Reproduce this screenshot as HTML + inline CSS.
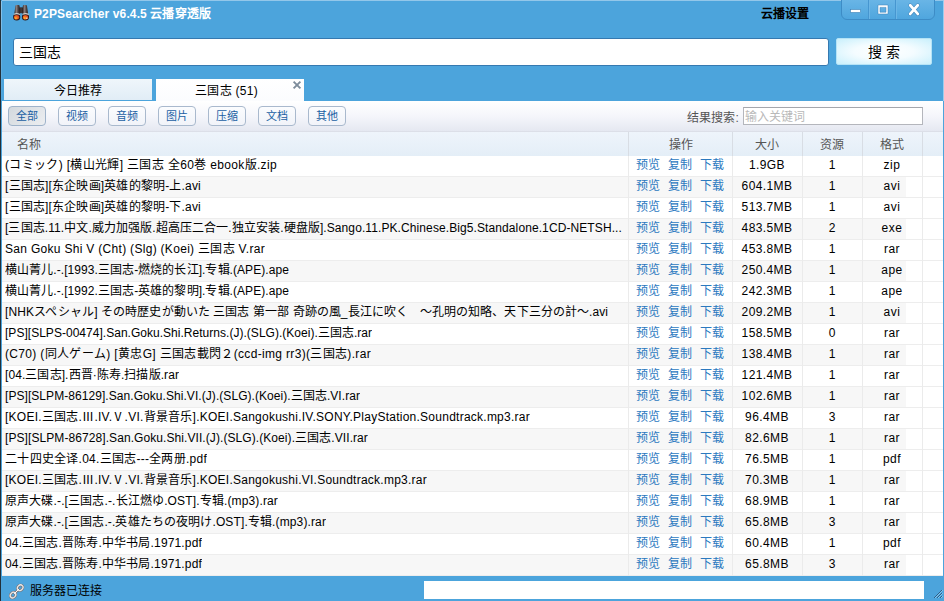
<!DOCTYPE html>
<html lang="zh-CN"><head><meta charset="utf-8"><title>P2PSearcher v6.4.5 云播穿透版</title>
<style>
*{box-sizing:border-box;margin:0;padding:0}
html,body{width:944px;height:601px;overflow:hidden}
body{position:relative;background:#4ca4dc;font-family:"Liberation Sans",sans-serif;font-size:12px;color:#000;line-height:1}
.a{position:absolute;white-space:nowrap}
.k{display:inline-block;text-align:justify;text-align-last:justify;white-space:nowrap;vertical-align:baseline}
#bl{left:0;top:0;width:1px;height:601px;background:#22303a}
#br{left:943px;top:0;width:1px;height:101px;background:#9ccdee}
#bt{left:2px;top:0;width:942px;height:1px;background:#93c7ea}
#bl2{left:1px;top:1px;width:1px;height:100px;background:linear-gradient(#8cc4ea,#4ca4dc)}
#title{left:34px;top:6px;height:16px;line-height:16px;font-weight:bold;color:#fff;font-size:12px;letter-spacing:.12px}
#yb{left:761px;top:6px;height:16px;line-height:16px;font-weight:bold;color:#000;font-size:12px}
#wc{left:841px;top:-1px;width:94px;height:21px;border:1px solid #3d8cc6;border-radius:0 0 6px 6px;background:linear-gradient(#69b5e6,#4fa6de);overflow:hidden}
#wc i{position:absolute;top:0;width:1px;height:19px;background:#4696d0;box-shadow:1px 0 0 #6cb6e6}
#si{left:13px;top:38px;width:816px;height:28px;background:#fff;border:1px solid #3579b0;border-radius:3px;font-size:14px;line-height:26px;padding-left:5px}
#sb{left:836px;top:38px;width:96px;height:27px;border-radius:2px;background:radial-gradient(ellipse at center,#ffffff 0%,#f4fcff 45%,#c9f0fc 100%);border:1px solid #b5e3f6;font-size:14px;line-height:26px;text-align:center;font-family:"Liberation Sans",serif}
#t1{left:4px;top:79px;width:148px;height:21px;background:linear-gradient(#eff6fb,#e1edf6);text-align:center;line-height:24px;overflow:hidden}
#t2{left:156px;top:79px;width:148px;height:22px;background:linear-gradient(#ffffff,#fbfcfe);line-height:24px;overflow:hidden;letter-spacing:.3px}
#fb{left:2px;top:101px;width:941px;height:31px;background:linear-gradient(#ffffff 0%,#f5f6fb 50%,#e5e8f1 100%);border-bottom:1px solid #dcdfe8}
.fbtn{position:absolute;top:5px;width:38px;height:20px;border:1px solid #a9b9cd;border-radius:4px;background:linear-gradient(#fbfcfe,#f1f3f9);color:#1a5fa3;text-align:center;line-height:19px;font-size:11px;white-space:nowrap}
.fbtn.sel{background:linear-gradient(135deg,#d3d9de,#eceef1);border-color:#9fb3ca}
#rl{left:687px;top:110px;letter-spacing:.1px;height:16px;line-height:16px;color:#555}
#ri{left:743px;top:107px;width:180px;height:18px;background:#fff;border:1px solid #b4b6bc;border-top-color:#a4a6ac;color:#b9b9b9;line-height:19px;padding-left:1px;overflow:hidden}
#th{left:2px;top:132px;width:941px;height:24px;background:linear-gradient(#eef4fb,#e4eef7);color:#555}
#th div{position:absolute;top:0;height:24px;line-height:26px;overflow:hidden;text-align:center;white-space:nowrap}
.vs{position:absolute;top:132px;width:1px;height:444px;background:linear-gradient(#d8dde4 0,#d8dde4 24px,#ebebeb 24px,#ebebeb 100%)}
#tb{left:2px;top:156px;width:941px;height:420px;background:#fff}
.r{position:absolute;left:0;width:941px;height:21px;border-bottom:1px solid #ededed}
.r.e:before{content:"";position:absolute;left:0;top:0;width:904px;height:20px;background:#f7f7f7}
.r>span{position:absolute;top:0;height:20px;line-height:19px;white-space:nowrap;overflow:hidden}
.n{left:3px;max-width:621px}
.o{left:634px;width:96px;color:#2b79bf;word-spacing:4.6px;text-align:left}
.s{left:730px;width:70px;text-align:center;letter-spacing:.4px}
.c{left:800px;width:60px;text-align:center}
.f{left:860px;width:60px;text-align:center;letter-spacing:.5px}
#st{left:1px;top:576px;width:942px;height:25px;background:#4ca4dc}
#stt{left:30px;top:583px;height:16px;line-height:16px}
#pb{left:424px;top:581px;width:500px;height:18px;background:#fff}
</style></head>
<body>
<div class="a" id="bt"></div><div class="a" id="bl2"></div>
<svg class="a" style="left:13px;top:5px" width="16" height="16" viewBox="0 0 16 16">
<defs><linearGradient id="g1" x1="0" x2="1" y1="0" y2="0"><stop offset="0" stop-color="#2a2020"/><stop offset=".38" stop-color="#8a7f7f"/><stop offset=".7" stop-color="#4a3f3f"/><stop offset="1" stop-color="#281e1e"/></linearGradient>
<radialGradient id="g2" cx=".35" cy=".7" r=".8"><stop offset="0" stop-color="#ffcc20"/><stop offset=".3" stop-color="#f57a26"/><stop offset="1" stop-color="#d8341a"/></radialGradient></defs>
<rect x="6" y="2.4" width="4.4" height="5.8" fill="#332a2a"/>
<rect x="7.6" y="2.6" width="1" height="5.4" fill="#4a4040"/>
<path d="M2.4 .9 Q2.5 .1 3.4 0 L5.6 0 Q6.5 .1 6.6 .9 L7 9.5 L1.2 9.5 Z" fill="url(#g1)"/>
<path d="M9.8 .9 Q9.9 .1 10.8 0 L13 0 Q13.9 .1 14 .9 L15.2 9.5 L9.4 9.5 Z" fill="url(#g1)"/>
<ellipse cx="3.7" cy="12.1" rx="3.6" ry="3.5" fill="#2e1c1a"/>
<ellipse cx="12.5" cy="12.1" rx="3.6" ry="3.5" fill="#2e1c1a"/>
<path d="M.7 9.4 Q3.7 7.9 6.9 9.4" stroke="#cfcfcf" stroke-width="1.05" fill="none"/>
<path d="M9.4 9.4 Q12.5 7.9 15.7 9.4" stroke="#cfcfcf" stroke-width="1.05" fill="none"/>
<ellipse cx="3.6" cy="12.2" rx="2.6" ry="2.3" fill="url(#g2)"/>
<ellipse cx="12.5" cy="12.2" rx="2.6" ry="2.3" fill="url(#g2)"/>
<ellipse cx="13.8" cy="13.2" rx=".9" ry=".6" fill="#fff" opacity=".75"/>
</svg>
<div class="a" id="title">P2PSearcher v6.4.5 <span class="k" style="width:60.6px">云播穿透版</span></div>
<div class="a" id="yb"><span class="k" style="width:48px">云播设置</span></div>
<div class="a" id="wc"><i style="left:26px"></i><i style="left:53px"></i>
<svg style="position:absolute;left:0;top:0" width="92" height="20" viewBox="0 0 92 20">
<rect x="8.5" y="9.5" width="10" height="3" fill="#fff" stroke="#3a7fb5" stroke-width=".6"/>
<path d="M36 5h10v9h-10z M38 7.4v4.8h6v-4.8z" fill="#fff" fill-rule="evenodd" stroke="#3a7fb5" stroke-width=".5"/>
<path d="M68.2 5.3l7.6 8.6M75.8 5.3l-7.6 8.6" stroke="#3a7fb5" stroke-width="3.8" stroke-linecap="round"/>
<path d="M68.2 5.3l7.6 8.6M75.8 5.3l-7.6 8.6" stroke="#fff" stroke-width="2.8" stroke-linecap="round"/>
</svg></div>
<div class="a" id="si"><span class="k" style="width:42px">三国志</span></div>
<div class="a" id="sb"><span class="k" style="width:14px">搜</span> <span class="k" style="width:14px">索</span></div>
<div class="a" id="t1"><span class="k" style="width:48px">今日推荐</span></div>
<div class="a" id="t2"><span style="position:absolute;left:39px;top:0"><span class="k" style="width:36.9px">三国志</span> (51)</span><svg style="position:absolute;left:136px;top:1px" width="10" height="10" viewBox="0 0 10 10"><path d="M1.6 1.6l6.8 6.8M8.4 1.6l-6.8 6.8" stroke="#7d8c9b" stroke-width="1.9"/></svg></div>
<div class="a" id="fb"><div class="fbtn sel" style="left:6px"><span class="k" style="width:22px">全部</span></div><div class="fbtn" style="left:56px"><span class="k" style="width:22px">视频</span></div><div class="fbtn" style="left:106px"><span class="k" style="width:22px">音频</span></div><div class="fbtn" style="left:156px"><span class="k" style="width:22px">图片</span></div><div class="fbtn" style="left:206px"><span class="k" style="width:22px">压缩</span></div><div class="fbtn" style="left:256px"><span class="k" style="width:22px">文档</span></div><div class="fbtn" style="left:306px"><span class="k" style="width:22px">其他</span></div></div>
<div class="a" id="rl"><span class="k" style="width:48.4px">结果搜索</span>:</div><div class="a" id="ri"><span class="k" style="width:60px">输入关键词</span></div>
<div class="a" id="th"><div style="left:15px"><span class="k" style="width:24px">名称</span></div><div style="left:626px;width:105px"><span class="k" style="width:24px">操作</span></div><div style="left:730px;width:70px"><span class="k" style="width:24px">大小</span></div><div style="left:800px;width:60px"><span class="k" style="width:24px">资源</span></div><div style="left:860px;width:60px"><span class="k" style="width:24px">格式</span></div></div>
<div class="a" id="tb">
<div class="r" style="top:0px"><span class="n" style="letter-spacing:0.340px">(<span class="k" style="width:49.36px">コミック</span>) [<span class="k" style="width:49.36px">横山光輝</span>] <span class="k" style="width:37.02px">三国志</span> <span class="k" style="width:12.34px">全</span>60<span class="k" style="width:12.34px">巻</span> ebook<span class="k" style="width:12.34px">版</span>.zip</span><span class="o"><span class="k" style="width:24px">预览</span> <span class="k" style="width:24px">复制</span> <span class="k" style="width:24px">下载</span></span><span class="s">1.9GB</span><span class="c">1</span><span class="f">zip</span></div>
<div class="r e" style="top:21px"><span class="n" style="letter-spacing:0.180px">[<span class="k" style="width:36.54px">三国志</span>][<span class="k" style="width:48.72px">东企映画</span>]<span class="k" style="width:60.9px">英雄的黎明</span>-<span class="k" style="width:12.18px">上</span>.avi</span><span class="o"><span class="k" style="width:24px">预览</span> <span class="k" style="width:24px">复制</span> <span class="k" style="width:24px">下载</span></span><span class="s">604.1MB</span><span class="c">1</span><span class="f">avi</span></div>
<div class="r" style="top:42px"><span class="n" style="letter-spacing:0.180px">[<span class="k" style="width:36.54px">三国志</span>][<span class="k" style="width:48.72px">东企映画</span>]<span class="k" style="width:60.9px">英雄的黎明</span>-<span class="k" style="width:12.18px">下</span>.avi</span><span class="o"><span class="k" style="width:24px">预览</span> <span class="k" style="width:24px">复制</span> <span class="k" style="width:24px">下载</span></span><span class="s">513.7MB</span><span class="c">1</span><span class="f">avi</span></div>
<div class="r e" style="top:63px"><span class="n" style="letter-spacing:0.096px">[<span class="k" style="width:36.29px">三国志</span>.11.<span class="k" style="width:24.19px">中文</span>.<span class="k" style="width:60.48px">威力加强版</span>.<span class="k" style="width:72.58px">超高压二合一</span>.<span class="k" style="width:48.38px">独立安装</span>.<span class="k" style="width:36.29px">硬盘版</span>].Sango.11.PK.Chinese.Big5.Standalone.1CD-NETSH...</span><span class="o"><span class="k" style="width:24px">预览</span> <span class="k" style="width:24px">复制</span> <span class="k" style="width:24px">下载</span></span><span class="s">483.5MB</span><span class="c">2</span><span class="f">exe</span></div>
<div class="r" style="top:84px"><span class="n" style="letter-spacing:0.303px">San Goku Shi V (Cht) (Slg) (Koei) <span class="k" style="width:36.91px">三国志</span> V.rar</span><span class="o"><span class="k" style="width:24px">预览</span> <span class="k" style="width:24px">复制</span> <span class="k" style="width:24px">下载</span></span><span class="s">453.8MB</span><span class="c">1</span><span class="f">rar</span></div>
<div class="r e" style="top:105px"><span class="n" style="letter-spacing:0.072px"><span class="k" style="width:48.29px">横山菁儿</span>.-.[1993.<span class="k" style="width:36.22px">三国志</span>-<span class="k" style="width:60.36px">燃烧的长江</span>].<span class="k" style="width:24.14px">专辑</span>.(APE).ape</span><span class="o"><span class="k" style="width:24px">预览</span> <span class="k" style="width:24px">复制</span> <span class="k" style="width:24px">下载</span></span><span class="s">250.4MB</span><span class="c">1</span><span class="f">ape</span></div>
<div class="r" style="top:126px"><span class="n" style="letter-spacing:0.072px"><span class="k" style="width:48.29px">横山菁儿</span>.-.[1992.<span class="k" style="width:36.22px">三国志</span>-<span class="k" style="width:60.36px">英雄的黎明</span>].<span class="k" style="width:24.14px">专辑</span>.(APE).ape</span><span class="o"><span class="k" style="width:24px">预览</span> <span class="k" style="width:24px">复制</span> <span class="k" style="width:24px">下载</span></span><span class="s">242.3MB</span><span class="c">1</span><span class="f">ape</span></div>
<div class="r e" style="top:147px"><span class="n" style="letter-spacing:0.073px">[NHK<span class="k" style="width:60.37px">スペシャル</span>] <span class="k" style="width:108.66px">その時歴史が動いた</span> <span class="k" style="width:36.22px">三国志</span> <span class="k" style="width:36.22px">第一部</span> <span class="k" style="width:48.29px">奇跡の風</span>_<span class="k" style="width:241.46px">長江に吹く　～孔明の知略、天下三分の計～</span>.avi</span><span class="o"><span class="k" style="width:24px">预览</span> <span class="k" style="width:24px">复制</span> <span class="k" style="width:24px">下载</span></span><span class="s">209.2MB</span><span class="c">1</span><span class="f">avi</span></div>
<div class="r" style="top:168px"><span class="n" style="letter-spacing:0.025px">[PS][SLPS-00474].San.Goku.Shi.Returns.(J).(SLG).(Koei).<span class="k" style="width:36.08px">三国志</span>.rar</span><span class="o"><span class="k" style="width:24px">预览</span> <span class="k" style="width:24px">复制</span> <span class="k" style="width:24px">下载</span></span><span class="s">158.5MB</span><span class="c">0</span><span class="f">rar</span></div>
<div class="r e" style="top:189px"><span class="n" style="letter-spacing:0.333px">(C70) (<span class="k" style="width:61.66px">同人ゲーム</span>) [<span class="k" style="width:24.67px">黄忠</span>G] <span class="k" style="width:74px">三国志載閃２</span>(ccd-img rr3)(<span class="k" style="width:37px">三国志</span>).rar</span><span class="o"><span class="k" style="width:24px">预览</span> <span class="k" style="width:24px">复制</span> <span class="k" style="width:24px">下载</span></span><span class="s">138.4MB</span><span class="c">1</span><span class="f">rar</span></div>
<div class="r" style="top:210px"><span class="n" style="letter-spacing:0.089px">[04.<span class="k" style="width:36.27px">三国志</span>].<span class="k" style="width:24.18px">西晋</span>·<span class="k" style="width:24.18px">陈寿</span>.<span class="k" style="width:36.27px">扫描版</span>.rar</span><span class="o"><span class="k" style="width:24px">预览</span> <span class="k" style="width:24px">复制</span> <span class="k" style="width:24px">下载</span></span><span class="s">121.4MB</span><span class="c">1</span><span class="f">rar</span></div>
<div class="r e" style="top:231px"><span class="n" style="letter-spacing:0.059px">[PS][SLPM-86129].San.Goku.Shi.VI.(J).(SLG).(Koei).<span class="k" style="width:36.18px">三国志</span>.VI.rar</span><span class="o"><span class="k" style="width:24px">预览</span> <span class="k" style="width:24px">复制</span> <span class="k" style="width:24px">下载</span></span><span class="s">102.6MB</span><span class="c">1</span><span class="f">rar</span></div>
<div class="r" style="top:252px"><span class="n" style="letter-spacing:0.248px">[KOEI.<span class="k" style="width:36.74px">三国志</span>.<span class="k" style="width:12.25px">Ⅲ</span>.IV.<span class="k" style="width:12.25px">Ⅴ</span>.VI.<span class="k" style="width:48.99px">背景音乐</span>].KOEI.Sangokushi.IV.SONY.PlayStation.Soundtrack.mp3.rar</span><span class="o"><span class="k" style="width:24px">预览</span> <span class="k" style="width:24px">复制</span> <span class="k" style="width:24px">下载</span></span><span class="s">96.4MB</span><span class="c">3</span><span class="f">rar</span></div>
<div class="r e" style="top:273px"><span class="n" style="letter-spacing:0.078px">[PS][SLPM-86728].San.Goku.Shi.VII.(J).(SLG).(Koei).<span class="k" style="width:36.23px">三国志</span>.VII.rar</span><span class="o"><span class="k" style="width:24px">预览</span> <span class="k" style="width:24px">复制</span> <span class="k" style="width:24px">下载</span></span><span class="s">82.6MB</span><span class="c">1</span><span class="f">rar</span></div>
<div class="r" style="top:294px"><span class="n" style="letter-spacing:0.260px"><span class="k" style="width:73.56px">二十四史全译</span>.04.<span class="k" style="width:36.78px">三国志</span>---<span class="k" style="width:36.78px">全两册</span>.pdf</span><span class="o"><span class="k" style="width:24px">预览</span> <span class="k" style="width:24px">复制</span> <span class="k" style="width:24px">下载</span></span><span class="s">76.5MB</span><span class="c">1</span><span class="f">pdf</span></div>
<div class="r e" style="top:315px"><span class="n" style="letter-spacing:0.248px">[KOEI.<span class="k" style="width:36.74px">三国志</span>.<span class="k" style="width:12.25px">Ⅲ</span>.IV.<span class="k" style="width:12.25px">Ⅴ</span>.VI.<span class="k" style="width:48.99px">背景音乐</span>].KOEI.Sangokushi.VI.Soundtrack.mp3.rar</span><span class="o"><span class="k" style="width:24px">预览</span> <span class="k" style="width:24px">复制</span> <span class="k" style="width:24px">下载</span></span><span class="s">70.3MB</span><span class="c">1</span><span class="f">rar</span></div>
<div class="r" style="top:336px"><span class="n" style="letter-spacing:0.138px"><span class="k" style="width:48.55px">原声大碟</span>.-.[<span class="k" style="width:36.41px">三国志</span>.-.<span class="k" style="width:48.55px">长江燃ゆ</span>.OST].<span class="k" style="width:24.28px">专辑</span>.(mp3).rar</span><span class="o"><span class="k" style="width:24px">预览</span> <span class="k" style="width:24px">复制</span> <span class="k" style="width:24px">下载</span></span><span class="s">68.9MB</span><span class="c">1</span><span class="f">rar</span></div>
<div class="r e" style="top:357px"><span class="n" style="letter-spacing:0.125px"><span class="k" style="width:48.5px">原声大碟</span>.-.[<span class="k" style="width:36.38px">三国志</span>.-.<span class="k" style="width:97px">英雄たちの夜明け</span>.OST].<span class="k" style="width:24.25px">专辑</span>.(mp3).rar</span><span class="o"><span class="k" style="width:24px">预览</span> <span class="k" style="width:24px">复制</span> <span class="k" style="width:24px">下载</span></span><span class="s">65.8MB</span><span class="c">3</span><span class="f">rar</span></div>
<div class="r" style="top:378px"><span class="n" style="letter-spacing:0.149px">04.<span class="k" style="width:36.45px">三国志</span>.<span class="k" style="width:36.45px">晋陈寿</span>.<span class="k" style="width:48.6px">中华书局</span>.1971.pdf</span><span class="o"><span class="k" style="width:24px">预览</span> <span class="k" style="width:24px">复制</span> <span class="k" style="width:24px">下载</span></span><span class="s">60.4MB</span><span class="c">1</span><span class="f">pdf</span></div>
<div class="r e" style="top:399px"><span class="n" style="letter-spacing:0.149px">04.<span class="k" style="width:36.45px">三国志</span>.<span class="k" style="width:36.45px">晋陈寿</span>.<span class="k" style="width:48.6px">中华书局</span>.1971.pdf</span><span class="o"><span class="k" style="width:24px">预览</span> <span class="k" style="width:24px">复制</span> <span class="k" style="width:24px">下载</span></span><span class="s">65.8MB</span><span class="c">3</span><span class="f">rar</span></div>
</div>
<div class="vs" style="left:628px"></div><div class="vs" style="left:732px"></div><div class="vs" style="left:802px"></div><div class="vs" style="left:862px"></div><div class="vs" style="left:922px"></div>
<div class="a" id="st"></div>
<svg class="a" style="left:8px;top:582.5px" width="18" height="17" viewBox="0 0 18 17">
<g fill="none" stroke="#7f7575" stroke-width="2.6"><ellipse cx="12.2" cy="4.7" rx="3" ry="2.5" transform="rotate(-45 12.2 4.7)"/><ellipse cx="5" cy="12.1" rx="3" ry="2.5" transform="rotate(-45 5 12.1)"/></g>
<path d="M6.6 10.5L10.6 6.3" stroke="#8a8080" stroke-width="2.4"/>
<g fill="none" stroke="#ebebeb" stroke-width="1.25"><ellipse cx="12.2" cy="4.7" rx="3" ry="2.5" transform="rotate(-45 12.2 4.7)"/><ellipse cx="5" cy="12.1" rx="3" ry="2.5" transform="rotate(-45 5 12.1)"/></g>
<path d="M6.2 10.9L11 5.9" stroke="#fff" stroke-width="1"/>
</svg>
<div class="a" id="stt"><span class="k" style="width:72px">服务器已连接</span></div>
<div class="a" id="pb"></div>
<svg class="a" style="left:930px;top:588px" width="13" height="12" viewBox="0 0 13 12" shape-rendering="crispEdges"><path d="M4 9h1v1h-1zM5 8h1v1h-1zM6 7h1v1h-1zM7 6h1v1h-1zM8 5h1v1h-1zM9 4h1v1h-1zM10 3h1v1h-1zM11 2h1v1h-1zM7 9h1v1h-1zM8 8h1v1h-1zM9 7h1v1h-1zM10 6h1v1h-1zM11 5h1v1h-1zM10 9h1v1h-1zM11 8h1v1h-1z" fill="#2b5f88"/><path d="M5 9h1v1h-1zM6 8h1v1h-1zM7 7h1v1h-1zM8 6h1v1h-1zM9 5h1v1h-1zM10 4h1v1h-1zM11 3h1v1h-1zM12 2h1v1h-1zM8 9h1v1h-1zM9 8h1v1h-1zM10 7h1v1h-1zM11 6h1v1h-1zM12 5h1v1h-1zM11 9h1v1h-1zM12 8h1v1h-1z" fill="#86c4ec"/></svg>
<div class="a" id="bl"></div><div class="a" id="br"></div>
</body></html>
